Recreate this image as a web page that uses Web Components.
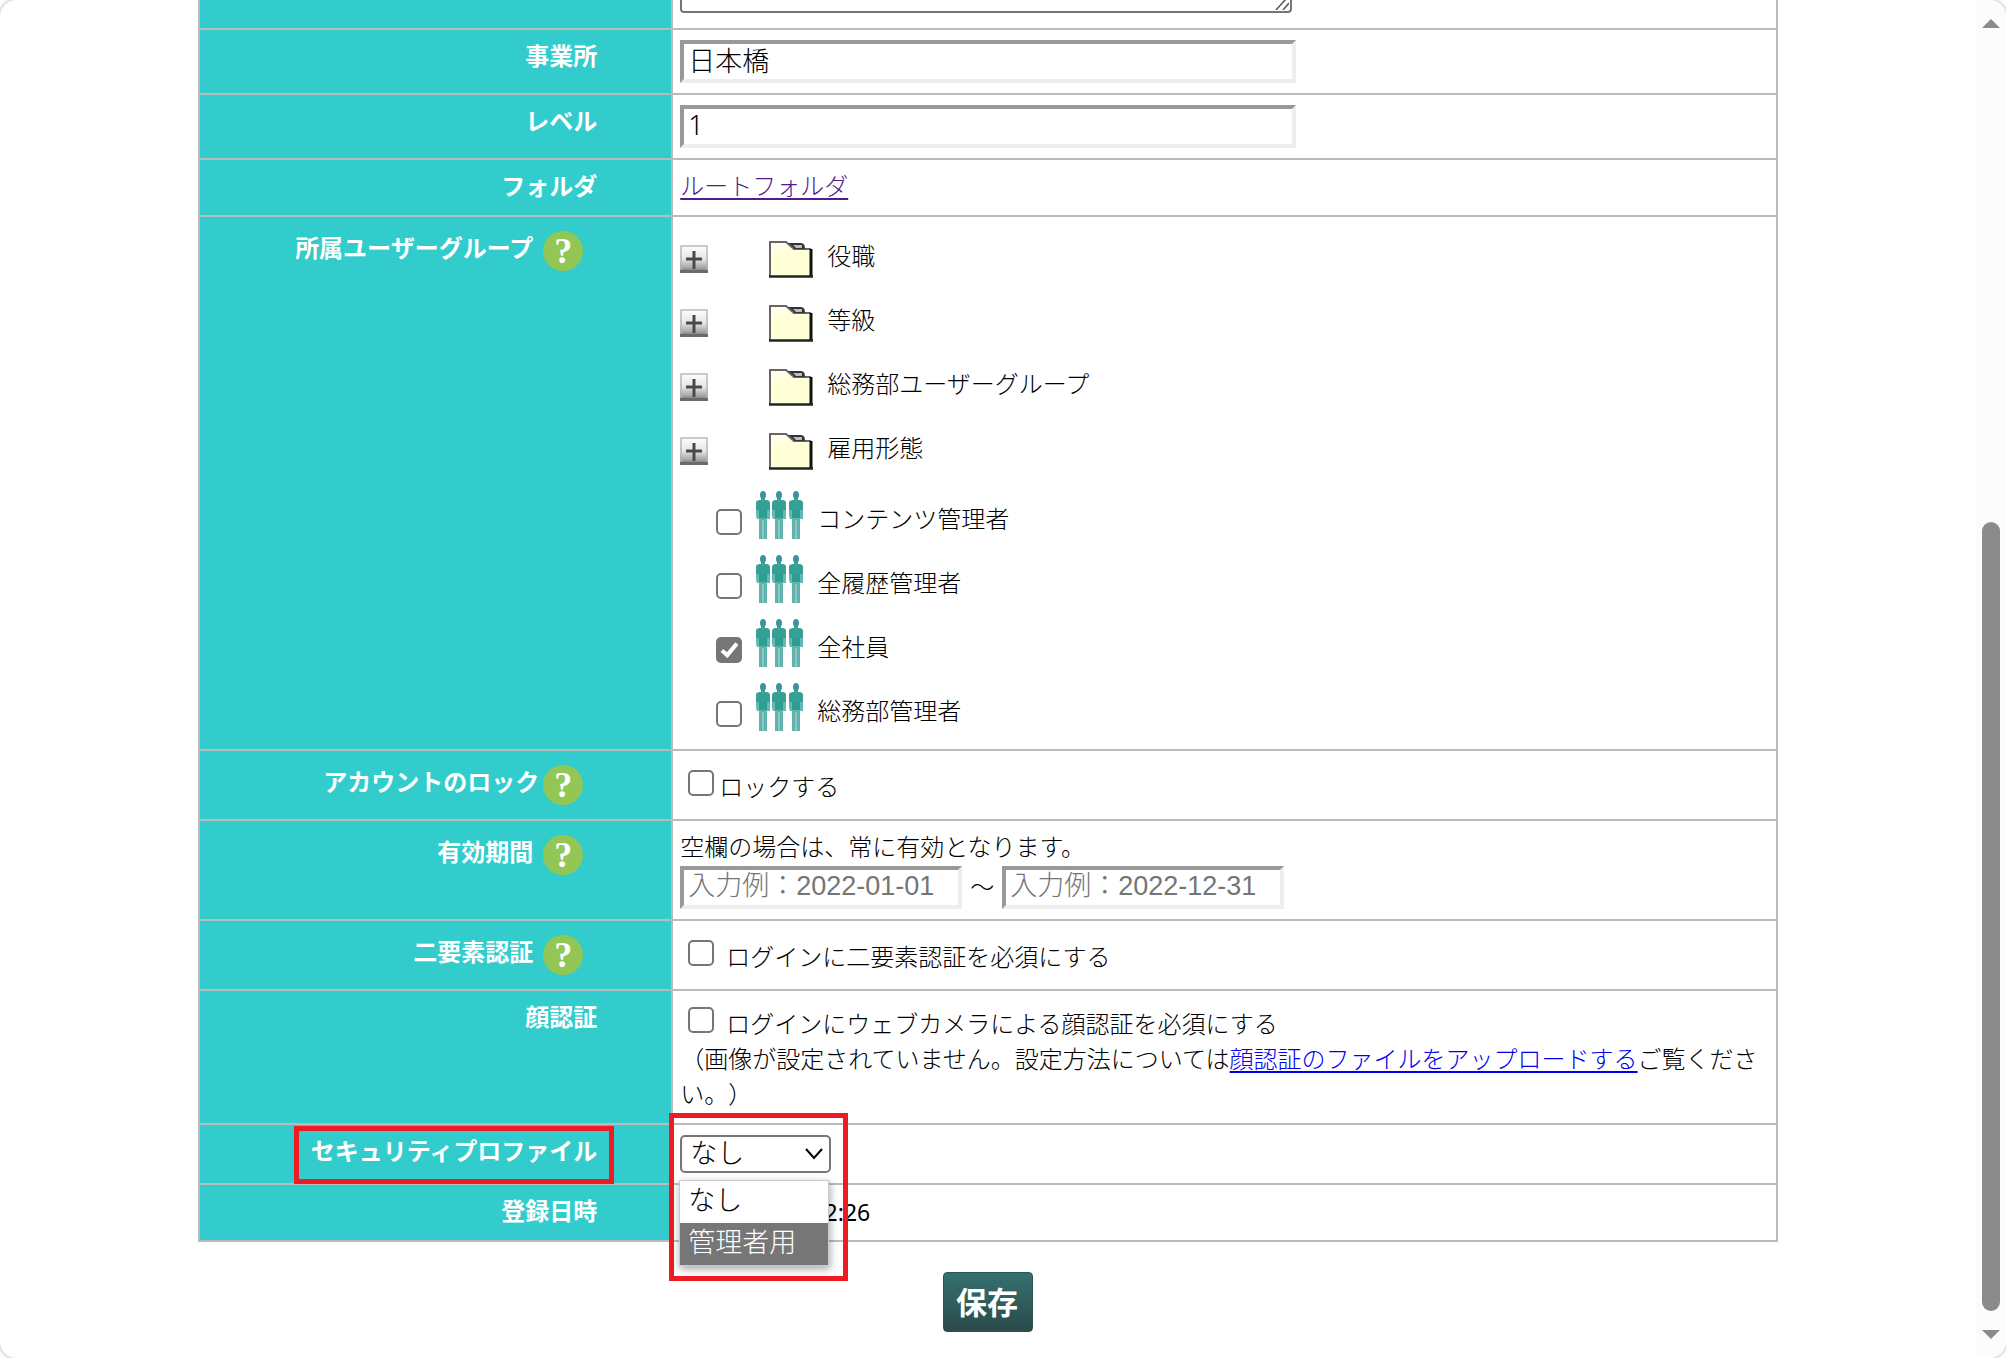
<!DOCTYPE html>
<html lang="ja">
<head>
  <meta charset="utf-8">
  <title>ユーザー編集</title>
  <style>
    body {
      margin: 0;
      background: #fff;
      color: #000;
      font-family: "Noto Sans CJK JP", "Noto Sans", sans-serif;
      font-size: 24px;
      line-height: 35px;
      text-spacing-trim: space-all;
    }
  </style>
</head>
<body>
  <app-window>
    <user-form></user-form>
    <save-button>保存</save-button>
  </app-window>

  <script>
    function makeTemplate(html) {
      const template = document.createElement('template');
      template.innerHTML = html;
      return template;
    }

    class BaseElement extends HTMLElement {
      constructor() {
        super();
        this.attachShadow({ mode: 'open' });
        this.shadowRoot.appendChild(this.constructor.template.content.cloneNode(true));
      }
    }

    const checkboxStyle = `
      input[type="checkbox"] {
        appearance: none;
        box-sizing: border-box;
        flex: none;
        display: grid;
        justify-content: center;
        width: 26px;
        height: 26px;
        margin: 0;
        border: 2px solid #767676;
        border-radius: 5px;
        background: #fff;
      }

      input[type="checkbox"]:checked {
        background: #767676;
      }

      input[type="checkbox"]:checked::after {
        content: "";
        width: 5px;
        height: 13px;
        margin-top: 1px;
        border: solid #fff;
        border-width: 0 4px 4px 0;
        transform: rotate(40deg);
      }
    `;

    // Window frame with the page scrollbar
    class AppWindow extends BaseElement {
      static template = makeTemplate(`
        <style>
          :host {
            display: flex;
            min-height: 100vh;
            overflow: hidden;
            border-radius: 16px;
            box-shadow: 0 0 4px rgba(0, 0, 0, 0.35);
            background: #fff;
          }

          main {
            flex: 1;
            min-width: 0;
            display: flex;
            flex-direction: column;
            align-items: center;
            padding-bottom: 26px;
          }
        </style>
        <main><slot></slot></main>
        <page-scrollbar></page-scrollbar>
      `);
    }

    class PageScrollbar extends BaseElement {
      static template = makeTemplate(`
        <style>
          :host {
            flex: none;
            box-sizing: border-box;
            display: flex;
            flex-direction: column;
            align-items: center;
            width: 30px;
            padding: 19px 0;
            background: #fcfcfc;
          }

          svg {
            flex: none;
            fill: #8b8b8b;
          }

          .track {
            flex: 1;
            display: grid;
            grid-template-rows: 494fr 789fr 19fr;
          }

          .thumb {
            grid-row: 2;
            width: 18px;
            border-radius: 9px;
            background: #8b8b8b;
          }
        </style>
        <svg width="18" height="9"><path d="M9 0 L18 9 H0 Z"/></svg>
        <div class="track"><div class="thumb"></div></div>
        <svg width="18" height="9"><path d="M0 0 H18 L9 9 Z"/></svg>
      `);
    }

    class HelpButton extends BaseElement {
      static template = makeTemplate(`
        <style>
          :host {
            display: block;
            flex: none;
            margin: 7px 14px 1px 0;
          }

          button {
            display: block;
            width: 40px;
            height: 40px;
            padding: 0;
            border: 0;
            border-radius: 50%;
            background: #92c755;
            color: #fff;
            font: bold 36px/40px "Liberation Serif", serif;
            text-align: center;
          }
        </style>
        <button type="button">?</button>
      `);
    }

    // Closed folder of the user group tree
    class TreeFolder extends BaseElement {
      static template = makeTemplate(`
        <style>
          :host {
            display: flex;
            align-items: center;
            height: 64px;
          }

          button {
            width: 28px;
            height: 28px;
            margin: 0 61px 0 0;
            padding: 0;
            border: 0;
            background: none;
          }

          svg {
            display: block;
            flex: none;
          }

          span {
            padding: 0 0 10px 14px;
          }
        </style>
        <button type="button" aria-label="開く">
          <svg width="28" height="28" viewBox="0 0 28 28">
            <defs>
              <linearGradient id="face" x1="0" y1="0" x2="0" y2="1">
                <stop offset="0" stop-color="#fff"/>
                <stop offset="0.5" stop-color="#e6e6e6"/>
                <stop offset="0.8" stop-color="#a8a8a8"/>
                <stop offset="1" stop-color="#666"/>
              </linearGradient>
            </defs>
            <rect width="28" height="28" fill="url(#face)"/>
            <path d="M1 28 V1 H27 V28" fill="none" stroke="#b4b4b4" stroke-opacity="0.7" stroke-width="2"/>
            <path d="M0 26.500 H28" stroke="#6a6a6a" stroke-width="3"/>
            <path d="M6 14 H22 M14 6 V24" stroke="#4a4a4a" stroke-width="3"/>
          </svg>
        </button>
        <svg width="44" height="37" viewBox="0 0 44 37">
          <defs>
            <linearGradient id="paper" x1="0" y1="0" x2="0.300" y2="1">
              <stop offset="0" stop-color="#fffff2"/>
              <stop offset="0.500" stop-color="#ffffd6"/>
            </linearGradient>
          </defs>
          <path d="M1 1 H17 L25 8 H42 V36 H1 Z" fill="url(#paper)"/>
          <path d="M1 36 V1 H17 L25 8 H42" fill="none" stroke="#666" stroke-width="2"/>
          <path d="M19 2 H32 Q36 2 36 8 H26 Z" fill="#333"/>
          <path d="M24 4 H33 V7 H27 Z" fill="#bbb"/>
          <path d="M42 8 V36" stroke="#111" stroke-width="3"/>
          <path d="M0 35.500 H44" stroke="#222" stroke-width="2.500"/>
        </svg>
        <span><slot></slot></span>
      `);
    }

    // User group with a tick box
    class GroupItem extends BaseElement {
      static template = makeTemplate(`
        <style>
          ${checkboxStyle}

          :host {
            display: block;
            padding: 8px 0 8px 36px;
          }

          label {
            display: flex;
            align-items: flex-end;
            height: 48px;
            line-height: 42px;
          }

          input[type="checkbox"] {
            margin-bottom: 4px;
          }

          svg {
            flex: none;
            margin: 0 13px 0 14px;
          }
        </style>
        <label>
          <input type="checkbox">
          <svg width="48" height="48" viewBox="0 0 48 48">
            <defs>
              <g id="person">
                <path d="M0 11 Q0 9 4 9 H10 Q14 9 14 12 V25 L14 28 H11 V14 H3 V28 H1 L0 25 Z" fill="#63b9b6"/>
                <path d="M3 9 H11 V28 H3 Z" fill="#2f9c90"/>
                <path d="M1 11 Q2 9 5 9 H10 Q13 9 14 12 V19 H0 V12 Z" fill="#35a196"/>
                <path d="M3 27 H7 V48 H3 Z M7 27 H11 L11 48 H7 Z" fill="#5fb5ac"/>
                <path d="M7 29 V48" stroke="#b4dcd9" stroke-width="1"/>
                <path d="M5 7 H9 V10 H5 Z" fill="#4a9fa5"/>
                <ellipse cx="7" cy="4" rx="3" ry="4" fill="#3c939a"/>
              </g>
            </defs>
            <use href="#person"/>
            <use href="#person" x="16"/>
            <use href="#person" x="33"/>
          </svg>
          <span><slot></slot></span>
        </label>
      `);

      constructor() {
        super();
        this.shadowRoot.querySelector('input').checked = this.hasAttribute('checked');
      }
    }

    class SaveButton extends BaseElement {
      static template = makeTemplate(`
        <style>
          :host {
            display: block;
            margin-top: 30px;
          }

          button {
            display: block;
            width: 90px;
            height: 60px;
            padding: 0 2px 2px 0;
            border: 1px solid #2b5656;
            border-radius: 4px;
            background: linear-gradient(#357070, #2b4a4a);
            color: #fff;
            font: bold 31px/56px "Noto Sans CJK JP", sans-serif;
          }
        </style>
        <button type="submit"><slot></slot></button>
      `);
    }

    class UserForm extends BaseElement {
      static template = makeTemplate(`
        <style>
          ${checkboxStyle}

          :host {
            display: block;
            width: 80%;
          }

          table {
            width: 100%;
            border-collapse: collapse;
          }

          th,
          td {
            padding: 10px 6px 10px 7px;
            border: 2px solid #bbb;
            vertical-align: top;
            text-align: left;
            font-weight: 300;
          }

          th {
            box-sizing: border-box;
            width: 30%;
            padding: 7px 74px 13px 6px;
            background: #33cccc;
            color: #fff;
            font-weight: bold;
            text-align: right;
          }

          tr:first-child > * {
            padding-top: 0;
            border-top: 0;
          }

          p {
            margin: 0;
          }

          .line {
            padding-bottom: 6px;
            line-height: 29px;
          }

          .note {
            margin: -3px 0 3px;
          }

          .help {
            display: flex;
            justify-content: flex-end;
            gap: 10px;
            line-height: 46px;
          }

          .help.tight {
            gap: 4px;
          }

          .memo {
            position: relative;
            display: block;
            width: 612px;
            margin-bottom: 5px;
          }

          textarea {
            display: block;
            box-sizing: border-box;
            width: 100%;
            height: 13px;
            border: 2px solid #767676;
            border-top: 0;
            border-radius: 0 0 4px 4px;
            padding: 0;
            resize: none;
            overflow: hidden;
          }

          .memo svg {
            position: absolute;
            right: 3px;
            bottom: 3px;
          }

          input[type="text"] {
            box-sizing: border-box;
            display: block;
            width: 616px;
            height: 43px;
            margin: 0;
            padding: 0 4px 4px;
            border: 4px solid;
            border-color: #999 #eee #eee #999;
            background: #fff;
            color: #000;
            font: 300 27px/31px "Noto Sans", "Noto Sans CJK JP", sans-serif;
          }

          input[type="text"].date {
            width: 282px;
            padding-bottom: 2px;
            font-family: "Liberation Sans", "Noto Sans CJK JP", sans-serif;
            font-size: 27px;
          }

          input::placeholder {
            color: #757575;
          }

          .period {
            display: flex;
            gap: 8px;
            line-height: 40px;
          }

          a {
            color: #0000ee;
            text-underline-offset: 3px;
            text-decoration-thickness: 2px;
          }

          a.seen {
            color: #551a8b;
          }

          .check {
            display: flex;
            align-items: center;
            gap: 12px;
            height: 42px;
            padding-left: 8px;
          }

          .check.tall {
            height: 48px;
          }

          .check.tight {
            gap: 5px;
          }

          .check input {
            margin-bottom: 4px;
          }

          /* red frames round the security profile setting */
          .mark,
          .picker {
            position: relative;
            display: inline-block;
          }

          .mark::after,
          .picker::after {
            content: "";
            position: absolute;
            inset: -6px -17px -17px;
            border: 5px solid #ed1c24;
            pointer-events: none;
          }

          .picker {
            display: block;
            width: 151px;
            height: 38px;
          }

          .picker::after {
            inset: -22px -17px -108px -11px;
          }

          select {
            appearance: none;
            box-sizing: border-box;
            display: block;
            width: 100%;
            height: 38px;
            margin: 0;
            padding: 0 8px 2px;
            border: 2px solid #767676;
            border-radius: 5px;
            background: #fff;
            color: #000;
            font: 300 27px/32px "Noto Sans", "Noto Sans CJK JP", sans-serif;
          }

          .picker svg {
            position: absolute;
            right: 8px;
            top: 13px;
            pointer-events: none;
          }

          ul {
            position: absolute;
            z-index: 1;
            top: 45px;
            left: -1px;
            box-sizing: border-box;
            width: 150px;
            margin: 0;
            padding: 0;
            border: 1px solid #ccc;
            background: #fff;
            box-shadow: 1px 3px 8px rgba(0, 0, 0, 0.35);
            list-style: none;
            font-size: 27px;
            line-height: 36px;
          }

          li {
            padding: 0 8px 6px;
          }

          li[aria-selected="true"] {
            background: #767676;
            color: #fff;
          }

          time {
            display: block;
            width: 190px;
            font-family: "Noto Sans", sans-serif;
            font-weight: 400;
            font-size: 23px;
            text-align: right;
          }
        </style>

        <table>
          <tr>
            <th></th>
            <td>
              <div class="memo">
                <textarea aria-label="メモ"></textarea>
                <svg width="14" height="11" viewBox="0 0 14 11" fill="none" stroke="#555" stroke-width="1.500">
                  <path d="M1 11 L11 0 M8 11 L14 4"/>
                </svg>
              </div>
            </td>
          </tr>
          <tr>
            <th><label for="office">事業所</label></th>
            <td><input type="text" id="office" value="日本橋"></td>
          </tr>
          <tr>
            <th><label for="level">レベル</label></th>
            <td><input type="text" id="level" value="1"></td>
          </tr>
          <tr>
            <th>フォルダ</th>
            <td><p class="line"><a class="seen" href="#folder">ルートフォルダ</a></p></td>
          </tr>
          <tr>
            <th><div class="help">所属ユーザーグループ<help-button></help-button></div></th>
            <td>
              <tree-folder>役職</tree-folder>
              <tree-folder>等級</tree-folder>
              <tree-folder>総務部ユーザーグループ</tree-folder>
              <tree-folder>雇用形態</tree-folder>
              <group-item>コンテンツ管理者</group-item>
              <group-item>全履歴管理者</group-item>
              <group-item checked>全社員</group-item>
              <group-item>総務部管理者</group-item>
            </td>
          </tr>
          <tr>
            <th><div class="help tight">アカウントのロック<help-button></help-button></div></th>
            <td>
              <label class="check tall tight"><input type="checkbox"><span>ロックする</span></label>
            </td>
          </tr>
          <tr>
            <th><div class="help">有効期間<help-button></help-button></div></th>
            <td>
              <p class="line">空欄の場合は、常に有効となります。</p>
              <div class="period">
                <input type="text" class="date" aria-label="開始日" placeholder="入力例：2022-01-01">
                ～
                <input type="text" class="date" aria-label="終了日" placeholder="入力例：2022-12-31">
              </div>
            </td>
          </tr>
          <tr>
            <th><div class="help">二要素認証<help-button></help-button></div></th>
            <td>
              <label class="check tall"><input type="checkbox"><span>ログインに二要素認証を必須にする</span></label>
            </td>
          </tr>
          <tr>
            <th>顔認証</th>
            <td>
              <label class="check"><input type="checkbox"><span>ログインにウェブカメラによる顔認証を必須にする</span></label>
              <p class="note">（画像が設定されていません。設定方法については<a href="#upload">顔認証のファイルをアップロードする</a>ご覧ください。）</p>
            </td>
          </tr>
          <tr>
            <th><label class="mark" for="profile">セキュリティプロファイル</label></th>
            <td>
              <div class="picker">
                <select id="profile">
                  <option>なし</option>
                  <option>管理者用</option>
                </select>
                <svg width="18" height="12" viewBox="0 0 18 12" fill="none" stroke="#000" stroke-width="2">
                  <path d="M1 1 L9 10 L17 1"/>
                </svg>
                <ul role="listbox">
                  <li role="option">なし</li>
                  <li role="option" aria-selected="true">管理者用</li>
                </ul>
              </div>
            </td>
          </tr>
          <tr>
            <th>登録日時</th>
            <td><time>2:26</time></td>
          </tr>
        </table>
      `);
    }

    window.customElements.define('help-button', HelpButton);
    window.customElements.define('tree-folder', TreeFolder);
    window.customElements.define('group-item', GroupItem);
    window.customElements.define('page-scrollbar', PageScrollbar);
    window.customElements.define('save-button', SaveButton);
    window.customElements.define('user-form', UserForm);
    window.customElements.define('app-window', AppWindow);
  </script>
</body>
</html>
